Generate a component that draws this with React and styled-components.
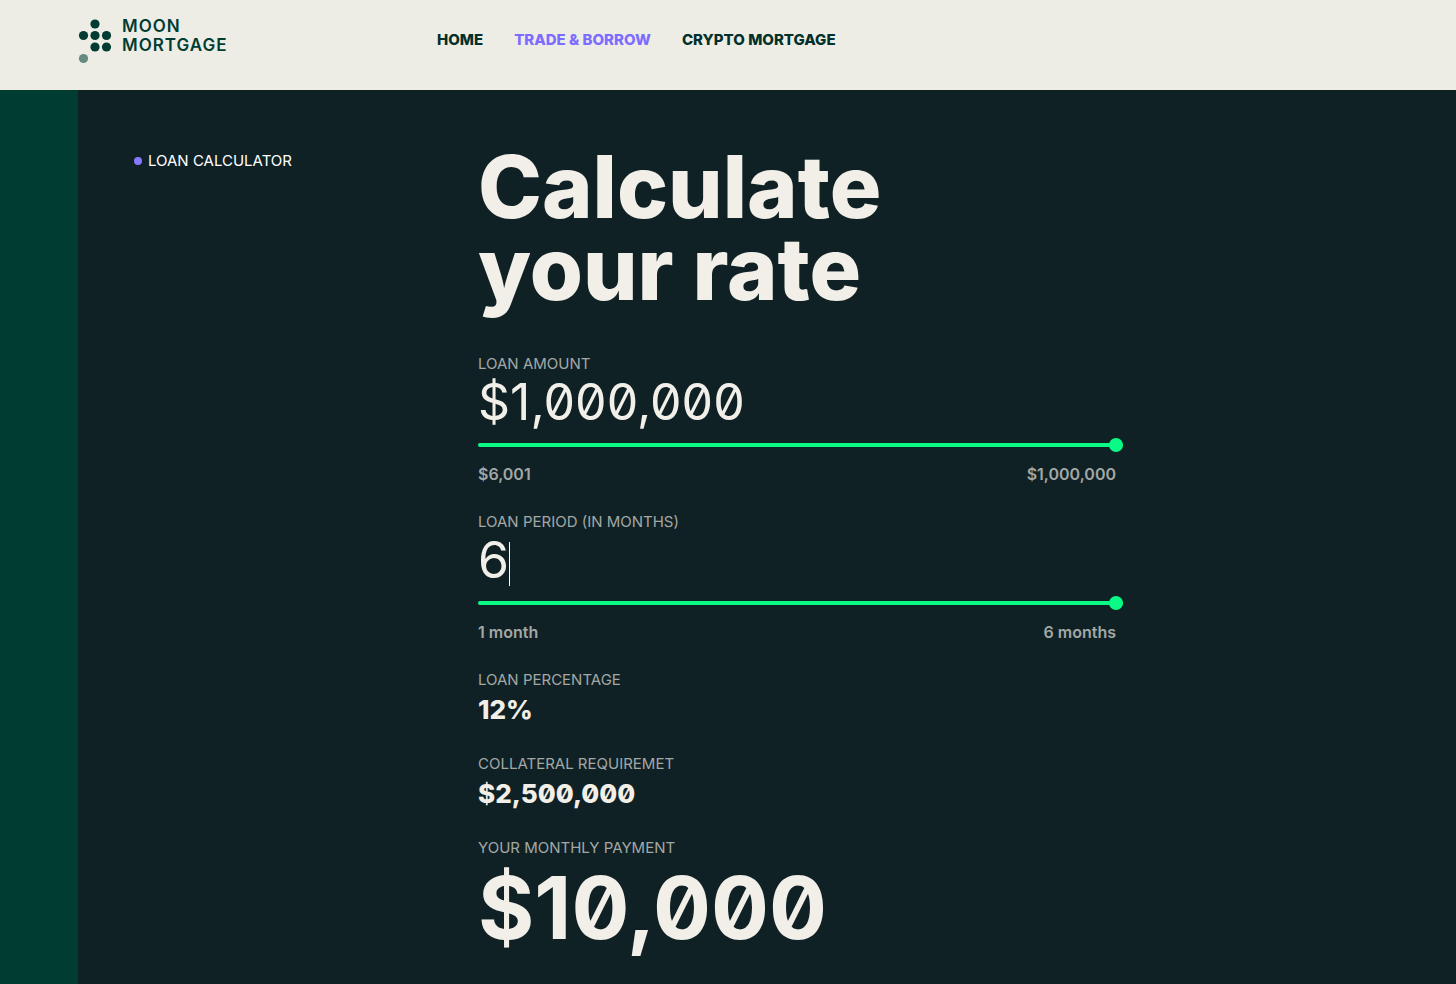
import React, { useState } from "react";
import styled, { createGlobalStyle } from "styled-components";

const GlobalStyle = createGlobalStyle`
  *, *::before, *::after {
    box-sizing: border-box;
  }
  body {
    margin: 0;
    background: #0f2125;
    font-family: Inter, "Liberation Sans", sans-serif;
    color: #f1efe8;
  }
`;

const Page = styled.div`
  display: flex;
  flex-direction: column;
  height: 100vh;
  overflow: hidden;
`;

const Header = styled.header`
  display: flex;
  flex: none;
  align-items: flex-start;
  height: 90px;
  padding: 17px 78px 0;
  background: #eeede5;
`;

const Logo = styled.a`
  display: flex;
  flex: 0 0 359px;
  gap: 10px;
  color: #003c32;
  font-size: 17px;
  font-weight: 600;
  line-height: 19px;
  letter-spacing: 1px;
  text-decoration: none;
`;

const Nav = styled.nav`
  display: flex;
  gap: 31px;
  padding-top: 13px;
`;

const NavLink = styled.a`
  color: ${(props) => (props.$active ? "#7c6cff" : "#03302a")};
  font-size: 15px;
  font-weight: 800;
  line-height: 20px;
  text-decoration: none;
  white-space: nowrap;
`;

const Main = styled.main`
  display: grid;
  flex: 1;
  grid-template-columns: 344px minmax(0, 638px);
  padding: 56px 24px 0 56px;
  border-left: 78px solid #003c32;
  background: #0f2125;
  min-height: 0;
`;

const SectionName = styled.div`
  display: flex;
  align-items: center;
  align-self: start;
  gap: 6px;
  padding-top: 5px;
  font-size: 15px;
  line-height: 20px;
  color: #ffffff;

  &::before {
    content: "";
    width: 8px;
    height: 8px;
    border-radius: 50%;
    background: #8678ff;
  }
`;

const Title = styled.h1`
  margin: 0 0 44px;
  font-size: 86px;
  font-weight: 800;
  line-height: 82px;
`;

const Field = styled.div`
  margin-bottom: 26px;
`;

const Label = styled.label`
  display: block;
  font-size: 15px;
  line-height: 20px;
  color: #a3a8a5;
  text-transform: uppercase;
`;

const Entry = styled.div`
  display: flex;
  align-items: center;
  height: 56px;
`;

const EntryInput = styled.input`
  field-sizing: content;
  min-width: 0;
  padding: 0;
  border: 0;
  outline: 0;
  background: transparent;
  color: inherit;
  caret-color: transparent;
  font: inherit;
  font-size: 50px;
  line-height: 56px;
  font-feature-settings: "zero";
`;

const Caret = styled.span`
  width: 1px;
  height: 44px;
  margin-top: 8px;
  background: #ffffff;
`;

/* half of the thumb hangs over the end of the track */
const Slider = styled.input`
  appearance: none;
  display: block;
  width: calc(100% + 7px);
  height: 14px;
  margin: 8px 0 10px;
  background: transparent;
  cursor: pointer;

  &::-webkit-slider-runnable-track {
    height: 4px;
    border-radius: 2px;
    background: linear-gradient(
      to right,
      #09fa85 ${(props) => props.$fill}%,
      #2a3b3e ${(props) => props.$fill}%
    );
  }
  &::-webkit-slider-thumb {
    appearance: none;
    width: 14px;
    height: 14px;
    margin-top: -5px;
    border: 0;
    border-radius: 50%;
    background: #09fa85;
  }
`;

const Limits = styled.div`
  display: flex;
  justify-content: space-between;
  font-size: 16px;
  font-weight: 600;
  line-height: 24px;
  color: #a3a8a5;
`;

const Result = styled.div`
  margin-bottom: 24px;
`;

const Value = styled.output`
  display: block;
  font-size: ${(props) => (props.$large ? "86px" : "26px")};
  font-weight: ${(props) => (props.$large ? 700 : 800)};
  line-height: ${(props) => (props.$large ? "100px" : "40px")};
  font-feature-settings: "zero";
`;

const MoonIcon = () => (
  <svg width="34" height="48" viewBox="0 0 34 48" fill="#003c32" aria-hidden="true">
    <circle cx="17" cy="7" r="4.6" />
    <circle cx="5.5" cy="18.5" r="4.6" />
    <circle cx="17" cy="18.5" r="4.6" />
    <circle cx="28.5" cy="18.5" r="4.6" />
    <circle cx="17" cy="30" r="4.6" />
    <circle cx="28.5" cy="30" r="4.6" />
    <circle cx="5.5" cy="41.5" r="4.6" fill="#668a80" />
  </svg>
);

const money = (number) => "$" + Math.round(number).toLocaleString("en-US");

const toNumber = (text, max) => Math.min(max, Number(text.replace(/\D/g, "")));

const RangeField = ({ id, label, text, value, min, max, limits, caret, onChange }) => (
  <Field>
    <Label htmlFor={id}>{label}</Label>
    <Entry>
      <EntryInput
        id={id}
        type="text"
        inputMode="numeric"
        value={text}
        onChange={(e) => onChange(toNumber(e.target.value, max))}
      />
      {caret && <Caret />}
    </Entry>
    <Slider
      type="range"
      aria-label={label}
      min={min}
      max={max}
      value={value}
      $fill={((value - min) / (max - min)) * 100}
      onChange={(e) => onChange(Number(e.target.value))}
    />
    <Limits>
      <span>{limits[0]}</span>
      <span>{limits[1]}</span>
    </Limits>
  </Field>
);

const App = () => {
  const [amount, setAmount] = useState(1000000);
  const [months, setMonths] = useState(6);

  return (
    <>
      <GlobalStyle />
      <Page>
        <Header>
          <Logo href="#">
            <MoonIcon />
            <span>
              MOON
              <br />
              MORTGAGE
            </span>
          </Logo>
          <Nav>
            <NavLink href="#">HOME</NavLink>
            <NavLink href="#" $active>TRADE &amp; BORROW</NavLink>
            <NavLink href="#">CRYPTO MORTGAGE</NavLink>
          </Nav>
        </Header>
        <Main>
          <SectionName>LOAN CALCULATOR</SectionName>
          <section>
            <Title>
              Calculate
              <br />
              your rate
            </Title>
            <RangeField
              id="amount"
              label="Loan amount"
              text={money(amount)}
              value={amount}
              min={6001}
              max={1000000}
              limits={["$6,001", "$1,000,000"]}
              onChange={setAmount}
            />
            <RangeField
              id="period"
              label="Loan period (in months)"
              text={String(months)}
              value={months}
              min={1}
              max={6}
              limits={["1 month", "6 months"]}
              caret
              onChange={setMonths}
            />
            <Result>
              <Label htmlFor="percentage">Loan percentage</Label>
              <Value id="percentage">12%</Value>
            </Result>
            <Result>
              <Label htmlFor="collateral">Collateral requiremet</Label>
              <Value id="collateral">{money(amount * 2.5)}</Value>
            </Result>
            <Result>
              <Label htmlFor="payment">Your monthly payment</Label>
              <Value id="payment" $large>{money(amount * 0.01)}</Value>
            </Result>
          </section>
        </Main>
      </Page>
    </>
  );
};

export default App;
